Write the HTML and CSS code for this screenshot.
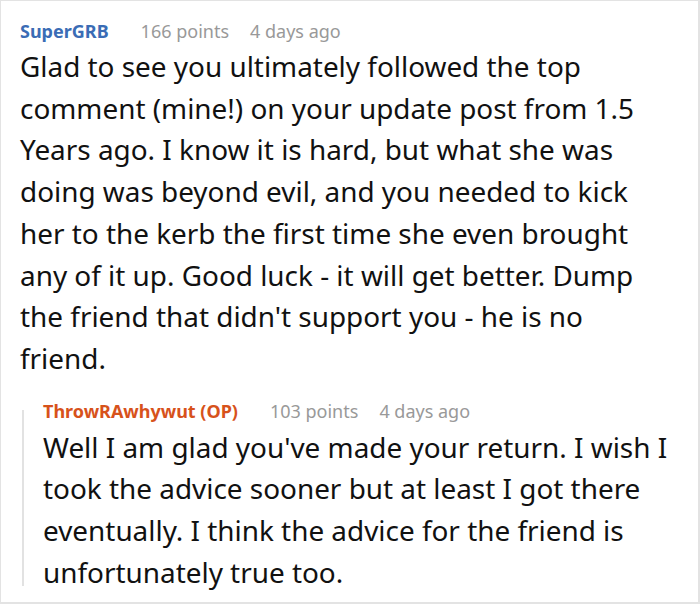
FILE: index.html
```html
<!DOCTYPE html>
<html>
<head>
<meta charset="utf-8">
<link rel="stylesheet" href="styles.css">
</head>
<body>
<div class="frame">
  <div class="comment">
    <div class="meta">
      <span class="author">SuperGRB</span>
      <span class="info">166 points</span>
      <span class="info">4 days ago</span>
    </div>
    <p class="text">Glad to see you ultimately followed the top comment (mine!) on your update post from 1.5 Years ago. I know it is hard, but what she was doing was beyond evil, and you needed to kick her to the kerb the first time she even brought any of it up. Good luck - it will get better. Dump the friend that didn't support you - he is no friend.</p>
    <div class="reply">
      <div class="meta">
        <span class="author op">ThrowRAwhywut (OP)</span>
        <span class="info">103 points</span>
        <span class="info">4 days ago</span>
      </div>
      <p class="text reply-text">Well I am glad you've made your return. I wish I took the advice sooner but at least I got there eventually. I think the advice for the friend is unfortunately true too.</p>
    </div>
  </div>
</div>
</body>
</html>
```
FILE: styles.css
```css
html, body {
  margin: 0;
  padding: 0;
  background: #fff;
}
.frame {
  width: 700px;
  height: 604px;
  box-sizing: border-box;
  border: 1px solid #e3e3e3;
  border-bottom-width: 2px;
  border-right-width: 2px;
  overflow: hidden;
  font-family: "Noto Sans", sans-serif;
}
.comment {
  padding: 17px 26px 0 19px;
}
.meta {
  display: flex;
  gap: 21px;
  font-size: 18px;
  line-height: 26px;
}
.author {
  font-weight: bold;
  color: #3a6cb5;
  margin-right: 11px;
}
.author.op {
  color: #d7521b;
}
.info {
  color: #999;
}
.text {
  margin: 2px 0 0 0;
  font-size: 27.9px;
  line-height: 41.7px;
  color: #111;
}
.reply-text {
  margin-top: 3px;
}
.reply {
  margin: 18px 0 0 2px;
  padding-left: 21px;
  background: linear-gradient(#e2e2e2, #e2e2e2) no-repeat 0 12px / 2px 176px;
}
```
